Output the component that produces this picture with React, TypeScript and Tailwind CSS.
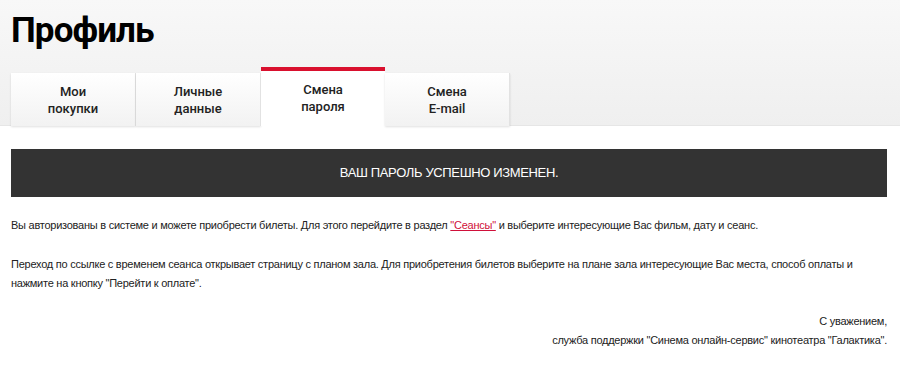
const tabs = [
  { id: "purchases", lines: ["Мои", "покупки"] },
  { id: "personal", lines: ["Личные", "данные"] },
  { id: "password", lines: ["Смена", "пароля"] },
  { id: "email", lines: ["Смена", "E-mail"] },
];

const body = "font-['Liberation_Sans','Arial',sans-serif]";

export default function App() {
  const active = "password";

  return (
    <div className="w-[900px] h-[366px] overflow-hidden bg-white">
      {/* header with title and tabs */}
      <div className="h-[126px] flex flex-col justify-between pl-[11px] bg-gradient-to-b from-[#f8f8f8] to-[#efefef] border-b border-[#e6e6e6]">
        <h1 className="pt-[9px] text-[35px] leading-[44px] font-bold text-black font-['Roboto',sans-serif] tracking-[-0.9px]">
          Профиль
        </h1>
        <div className="flex items-end -mb-px">
          {tabs.map((tab) => {
            const isActive = tab.id === active;
            return (
              <div
                key={tab.id}
                className={
                  isActive
                    ? "w-[124px] h-[59px] bg-white border-t-[4px] border-[#d9102e] flex flex-col items-center justify-center pb-[1px]"
                    : "w-[125px] h-[53px] bg-gradient-to-b from-[#ffffff] to-[#f2f2f2] border-r border-[#e2e2e2] shadow-[0_1px_2px_rgba(0,0,0,0.12)] flex flex-col items-center justify-center"
                }
              >
                {tab.lines.map((line) => (
                  <span
                    key={line}
                    className="text-[13px] leading-[17px] font-medium text-[#222] font-['Roboto',sans-serif]"
                  >
                    {line}
                  </span>
                ))}
              </div>
            );
          })}
        </div>
      </div>

      <div className="pl-[11px] pr-[13px]">
        <div className="mt-[23px] h-[48px] bg-[#333333] flex items-center justify-center">
          <span className={`${body} text-white text-[13px] tracking-[-0.35px] uppercase`}>
            Ваш пароль успешно изменен.
          </span>
        </div>

        <div className={`${body} text-[11px] leading-[19px] tracking-[-0.25px] text-[#222]`}>
          <p className="mt-[19px]">
            Вы авторизованы в системе и можете приобрести билеты. Для этого перейдите в раздел{" "}
            <a href="#" className="text-[#d0103a] underline">
              "Сеансы"
            </a>{" "}
            и выберите интересующие Вас фильм, дату и сеанс.
          </p>
          <p className="mt-[20px] pr-[20px]">
            Переход по ссылке с временем сеанса открывает страницу с планом зала. Для приобретения
            билетов выберите на плане зала интересующие Вас места, способ оплаты и нажмите на кнопку
            "Перейти к оплате".
          </p>
          <p className="mt-[19px] text-right">
            С уважением,
            <br />
            служба поддержки "Синема онлайн-сервис" кинотеатра "Галактика".
          </p>
        </div>
      </div>
    </div>
  );
}
